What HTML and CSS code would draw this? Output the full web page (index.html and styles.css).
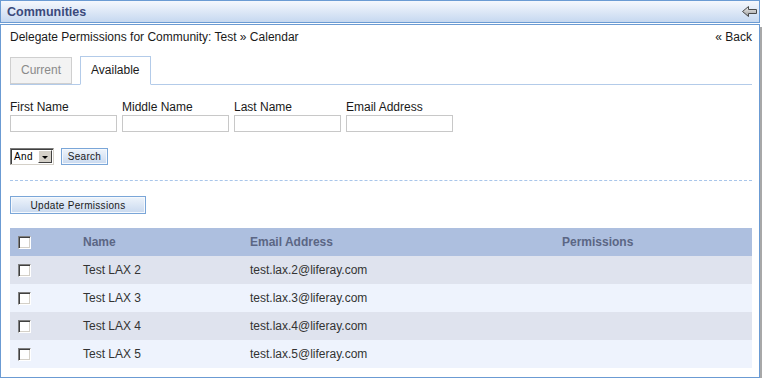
FILE: index.html
```html
<!DOCTYPE html>
<html lang="en">
<head>
    <meta charset="UTF-8">
    <meta name="viewport" content="width=device-width, initial-scale=1.0">
    <title>Communities</title>
    <link rel="stylesheet" href="styles.css">
</head>
<body>
    <div class="portlet">
        <div class="portlet-title">
            <span class="title-text">Communities</span>
            <svg class="back-icon" width="15" height="11" viewBox="0 0 15 11">
                <defs>
                    <linearGradient id="arrowFill" x1="0" y1="0" x2="0" y2="1">
                        <stop offset="0" stop-color="#f2f2f2"/>
                        <stop offset="1" stop-color="#9a9a9a"/>
                    </linearGradient>
                </defs>
                <polygon points="0.5,5.5 6.5,0.5 6.5,3.5 14.5,3.5 14.5,7.5 6.5,7.5 6.5,10.5" fill="url(#arrowFill)" stroke="#4a4a4a" stroke-width="1"/>
            </svg>
        </div>

        <div class="portlet-content">
            <div class="heading">
                <span>Delegate Permissions for Community: Test &raquo; Calendar</span>
                <a href="#" class="back-link">&laquo; Back</a>
            </div>

            <ul class="tabs">
                <li class="tab">Current</li>
                <li class="tab active">Available</li>
            </ul>

            <div class="search-fields">
                <div class="field">
                    <label for="first_name">First Name</label>
                    <input type="text" id="first_name">
                </div>
                <div class="field">
                    <label for="middle_name">Middle Name</label>
                    <input type="text" id="middle_name">
                </div>
                <div class="field">
                    <label for="last_name">Last Name</label>
                    <input type="text" id="last_name">
                </div>
                <div class="field">
                    <label for="email">Email Address</label>
                    <input type="text" id="email">
                </div>
            </div>

            <div class="search-actions">
                <span class="select">
                    <span class="select-value">And</span>
                    <span class="select-btn"><span class="caret"></span></span>
                </span>
                <button class="btn btn-search">Search</button>
            </div>

            <hr class="separator">

            <button class="btn btn-update">Update Permissions</button>

            <table class="results">
                <thead>
                    <tr>
                        <th class="col-check"><input type="checkbox" class="check"></th>
                        <th class="col-name">Name</th>
                        <th class="col-email">Email Address</th>
                        <th class="col-perm">Permissions</th>
                    </tr>
                </thead>
                <tbody>
                    <tr>
                        <td class="col-check"><input type="checkbox" class="check"></td>
                        <td>Test LAX 2</td>
                        <td>test.lax.2@liferay.com</td>
                        <td></td>
                    </tr>
                    <tr>
                        <td class="col-check"><input type="checkbox" class="check"></td>
                        <td>Test LAX 3</td>
                        <td>test.lax.3@liferay.com</td>
                        <td></td>
                    </tr>
                    <tr>
                        <td class="col-check"><input type="checkbox" class="check"></td>
                        <td>Test LAX 4</td>
                        <td>test.lax.4@liferay.com</td>
                        <td></td>
                    </tr>
                    <tr>
                        <td class="col-check"><input type="checkbox" class="check"></td>
                        <td>Test LAX 5</td>
                        <td>test.lax.5@liferay.com</td>
                        <td></td>
                    </tr>
                </tbody>
            </table>
        </div>
    </div>
</body>
</html>
```

FILE: styles.css
```css
body {
    margin: 0;
    font-family: "Liberation Sans", Arial, sans-serif;
    font-size: 12px;
    color: #1a1a1a;
    background: #fff;
}
.portlet {
    width: 760px;
}
.portlet-title {
    height: 21px;
    border: 1px solid #6b9bd3;
    background: linear-gradient(#f5f8fd, #c6d8f0);
    display: flex;
    align-items: center;
    justify-content: space-between;
    padding: 0 2px 0 6px;
}
.title-text {
    font-size: 12.5px;
    font-weight: bold;
    color: #3b4a7c;
}
.back-icon {
    display: block;
}
.portlet-content {
    margin-top: 1px;
    border: 1px solid #6b9bd3;
    padding: 5px 7px 9px 9px;
    box-shadow: 2px 3px 0 #a8a8a8;
}
.heading {
    display: flex;
    justify-content: space-between;
    line-height: 14px;
}
.back-link {
    color: #1a1a1a;
    text-decoration: none;
}
.tabs {
    list-style: none;
    margin: 12px 0 0;
    padding: 0;
    display: flex;
    align-items: flex-end;
    border-bottom: 1px solid #b3cbe9;
}
.tab {
    padding: 0 10px;
    line-height: 25px;
    border: 1px solid #cfcfcf;
    background: #f3f3f3;
    color: #8a8a8a;
    margin-right: 8px;
}
.tab.active {
    line-height: 27px;
    border-color: #b3cbe9;
    border-bottom-color: #fff;
    background: #fff;
    color: #1a1a1a;
    margin-bottom: -1px;
}
.search-fields {
    display: flex;
    gap: 5px;
    margin-top: 15px;
}
.field label {
    display: block;
    line-height: 14px;
    margin-bottom: 1px;
}
.field input {
    display: block;
    width: 107px;
    height: 17px;
    box-sizing: border-box;
    border: 1px solid #c8c8c8;
    margin: 0;
    padding: 0 2px;
}
.search-actions {
    display: flex;
    gap: 7px;
    margin-top: 16px;
}
.select {
    display: flex;
    width: 44px;
    height: 17px;
    box-sizing: border-box;
    border: 1px solid;
    border-color: #7c7c7c #d4d0c8 #d4d0c8 #7c7c7c;
    box-shadow: inset 1px 1px 0 #404040;
    background: #fff;
}
.select-value {
    flex: 1;
    font-size: 10px;
    letter-spacing: 0.4px;
    line-height: 15px;
    padding-left: 3px;
    color: #000;
}
.select-btn {
    width: 14px;
    margin: 1px 1px 1px 0;
    box-sizing: border-box;
    background: #d4d0c8;
    border: 1px solid;
    border-color: #fff #404040 #404040 #fff;
    display: flex;
    align-items: center;
    justify-content: center;
}
.caret {
    width: 0;
    height: 0;
    border-left: 3px solid transparent;
    border-right: 3px solid transparent;
    border-top: 3px solid #000;
    margin-top: 1px;
}
.btn {
    font-family: "Liberation Sans", Arial, sans-serif;
    font-size: 10px;
    letter-spacing: 0.3px;
    color: #1a1a1a;
    border: 1px solid #7aa6d8;
    background: linear-gradient(#eef4fb, #c9d9ef);
    box-shadow: inset 0 0 0 1px #f6f9fd;
    padding: 0;
    margin: 0;
    cursor: pointer;
}
.btn-search {
    width: 47px;
    height: 17px;
}
.btn-update {
    display: block;
    width: 136px;
    height: 18px;
    margin-top: 15px;
}
.separator {
    border: 0;
    border-top: 1px dashed #a9c6ea;
    margin: 15px 0 0;
    height: 0;
}
.results {
    width: 742px;
    margin-top: 14px;
    border-collapse: collapse;
    table-layout: fixed;
}
.results th,
.results td {
    height: 28px;
    padding: 0 8px;
    text-align: left;
    vertical-align: middle;
}
.results th {
    background: #adbfdf;
    color: #5b6684;
    font-weight: bold;
}
.results td {
    color: #333;
}
.results tbody tr:nth-child(odd) {
    background: #dfe3ee;
}
.results tbody tr:nth-child(even) {
    background: #eef3fd;
}
.col-check {
    width: 49px;
}
.col-name {
    width: 151px;
}
.col-email {
    width: 296px;
}
.check {
    -webkit-appearance: none;
    appearance: none;
    display: block;
    width: 13px;
    height: 13px;
    margin: 0;
    box-sizing: border-box;
    border: 1px solid;
    border-color: #808080 #fff #fff #808080;
    box-shadow: inset 1px 1px 0 #404040, inset -1px -1px 0 #d4d0c8;
    background: #fff;
}
```
